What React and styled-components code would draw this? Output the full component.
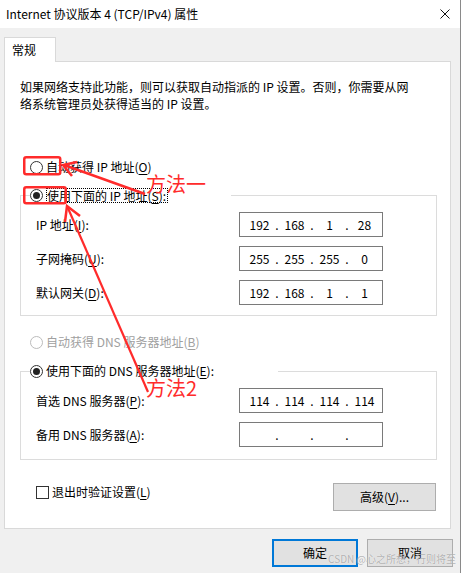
import React from "react";
import styled, { createGlobalStyle } from "styled-components";

const Global = createGlobalStyle`
  html, body { margin: 0; padding: 0; background: #fff; }
  body {
    font-family: "Noto Sans CJK SC", "Noto Sans", sans-serif;
    font-size: 12px;
    color: #000;
  }
  * { box-sizing: border-box; }
`;

const Window = styled.div`
  position: relative;
  width: 461px;
  height: 573px;
  border-right: 1px solid #8a8a8a;
  background: #f0f0f0;
  display: flex;
  flex-direction: column;
  overflow: hidden;
`;

const TitleBar = styled.div`
  height: 28px;
  flex: none;
  background: #fff;
  display: flex;
  align-items: center;
  justify-content: space-between;
  padding: 0 10px 1px 6px;
  line-height: 16px;
`;

const Body = styled.div`
  padding: 9px 0 0 4px;
  display: flex;
  flex-direction: column;
`;

const TabStrip = styled.div`
  display: flex;
`;

const Tab = styled.div`
  position: relative;
  z-index: 1;
  width: 52px;
  height: 25px;
  margin-bottom: -1px;
  background: #fff;
  border: 1px solid #d9d9d9;
  border-bottom: none;
  padding-left: 7px;
  line-height: 23px;
`;

const Pane = styled.div`
  width: 447px;
  height: 468px;
  background: #fff;
  border: 1px solid #d9d9d9;
  padding: 16px 13px 17px 15px;
  display: flex;
  flex-direction: column;
`;

const Desc = styled.p`
  margin: 0;
  line-height: 17px;
  width: 400px;
`;

const RadioRow = styled.div`
  display: flex;
  align-items: center;
  gap: 3px;
  height: 16px;
  line-height: 16px;
  margin: ${p => p.$mt}px 0 0 10px;
  color: ${p => (p.$disabled ? "#a0a0a0" : "#000")};
`;

const RadioCircle = styled.span`
  flex: none;
  width: 13px;
  height: 13px;
  border-radius: 50%;
  border: 1px solid ${p => (p.$disabled ? "#bcbcbc" : "#333")};
  background: #fff;
  display: flex;
  align-items: center;
  justify-content: center;
  &::after {
    content: "";
    display: ${p => (p.$checked ? "block" : "none")};
    width: 7px;
    height: 7px;
    border-radius: 50%;
    background: #222;
  }
`;

const Group = styled.fieldset`
  margin: ${p => p.$mt}px 0 0 0;
  padding: 9px 0 ${p => p.$pb}px 15px;
  border: 1px solid #dcdcdc;
  min-width: 0;
  width: 417px;
`;

const Legend = styled.legend`
  padding: 0;
  margin-left: -6px;
  width: ${p => p.$w}px;
  height: 16px;
  line-height: 16px;
  display: flex;
  align-items: center;
  gap: 3px;
`;

const FocusLabel = styled.span`
  border: 1px dotted #000;
  line-height: 13px;
  padding: 0 1px 0 0;
`;

const Rows = styled.div`
  display: flex;
  flex-direction: column;
  gap: 9px;
`;

const FieldRow = styled.div`
  display: grid;
  grid-template-columns: 203px 144px;
  align-items: center;
  line-height: 16px;
`;

const IpBox = styled.div`
  width: 144px;
  height: 25px;
  border: 1px solid #7a7a7a;
  background: #fff;
  display: flex;
  align-items: center;
  padding-left: 4px;
  line-height: 16px;
`;

const Octet = styled.span`
  width: 31px;
  text-align: center;
`;

const Dot = styled.span`
  width: 4px;
  text-align: center;
`;

const Key = styled.span`
  text-decoration: underline;
  text-underline-offset: 2px;
`;

const Footer = styled.div`
  margin-top: 23px;
  display: flex;
  justify-content: space-between;
  align-items: flex-start;
  padding-right: 1px;
`;

const CheckRow = styled.div`
  margin: 1px 0 0 16px;
  display: flex;
  align-items: center;
  gap: 3px;
  line-height: 16px;
`;

const CheckBox = styled.span`
  width: 13px;
  height: 13px;
  border: 1px solid #333;
  background: #fff;
`;

const Button = styled.div`
  width: ${p => p.$w}px;
  height: 28px;
  background: #e1e1e1;
  border: ${p => (p.$focus ? "2px solid #0078d7" : "1px solid #adadad")};
  display: flex;
  align-items: center;
  justify-content: center;
  line-height: 16px;
`;

const ButtonBar = styled.div`
  margin-top: 10px;
  display: flex;
  justify-content: flex-end;
  gap: 9px;
  padding-right: 7px;
`;

const Overlay = styled.svg`
  position: absolute;
  left: 0;
  top: 0;
  pointer-events: none;
`;

const Note = styled.span`
  position: absolute;
  left: ${p => p.$x}px;
  top: ${p => p.$y}px;
  color: #ff2b2b;
  font-size: 20px;
  line-height: 22px;
  font-family: "Noto Sans CJK SC", sans-serif;
  white-space: nowrap;
`;

const Watermark = styled.span`
  position: absolute;
  right: 4px;
  bottom: 8px;
  font-size: 10px;
  line-height: 12px;
  color: rgba(120, 120, 120, 0.55);
  text-shadow: 0 0 1px rgba(255, 255, 255, 0.9);
  white-space: nowrap;
`;

const Ip = ({ v }) => (
  <IpBox>
    <Octet>{v[0]}</Octet>
    <Dot>.</Dot>
    <Octet>{v[1]}</Octet>
    <Dot>.</Dot>
    <Octet>{v[2]}</Octet>
    <Dot>.</Dot>
    <Octet>{v[3]}</Octet>
  </IpBox>
);

const RED = "#ff2b2b";

export default function App() {
  return (
    <>
      <Global />
      <Window>
        <TitleBar>
          <span>Internet 协议版本 4 (TCP/IPv4) 属性</span>
          <svg width="10" height="10" viewBox="0 0 10 10">
            <path d="M0.5 0.5 L9.5 9.5 M9.5 0.5 L0.5 9.5" stroke="#111" strokeWidth="1" />
          </svg>
        </TitleBar>
        <Body>
          <TabStrip>
            <Tab>常规</Tab>
          </TabStrip>
          <Pane>
            <Desc>
              如果网络支持此功能，则可以获取自动指派的 IP 设置。否则，你需要从网络系统管理员处获得适当的 IP 设置。
            </Desc>
            <RadioRow $mt={47}>
              <RadioCircle />
              <span>
                自动获得 IP 地址(<Key>O</Key>)
              </span>
            </RadioRow>
            <Group $mt={12} $pb={10}>
              <Legend $w={201}>
                <RadioCircle $checked />
                <FocusLabel>
                  使用下面的 IP 地址(<Key>S</Key>):
                </FocusLabel>
              </Legend>
              <Rows>
                <FieldRow>
                  <span>
                    IP 地址(<Key>I</Key>):
                  </span>
                  <Ip v={["192", "168", "1", "28"]} />
                </FieldRow>
                <FieldRow>
                  <span>
                    子网掩码(<Key>U</Key>):
                  </span>
                  <Ip v={["255", "255", "255", "0"]} />
                </FieldRow>
                <FieldRow>
                  <span>
                    默认网关(<Key>D</Key>):
                  </span>
                  <Ip v={["192", "168", "1", "1"]} />
                </FieldRow>
              </Rows>
            </Group>
            <RadioRow $mt={18} $disabled>
              <RadioCircle $disabled />
              <span>
                自动获得 DNS 服务器地址(<Key>B</Key>)
              </span>
            </RadioRow>
            <Group $mt={13} $pb={12}>
              <Legend $w={248}>
                <RadioCircle $checked />
                <span>
                  使用下面的 DNS 服务器地址(<Key>E</Key>):
                </span>
              </Legend>
              <Rows>
                <FieldRow>
                  <span>
                    首选 DNS 服务器(<Key>P</Key>):
                  </span>
                  <Ip v={["114", "114", "114", "114"]} />
                </FieldRow>
                <FieldRow>
                  <span>
                    备用 DNS 服务器(<Key>A</Key>):
                  </span>
                  <Ip v={["", "", "", ""]} />
                </FieldRow>
              </Rows>
            </Group>
            <Footer>
              <CheckRow>
                <CheckBox />
                <span>
                  退出时验证设置(<Key>L</Key>)
                </span>
              </CheckRow>
              <Button $w={103}>
                高级(<Key>V</Key>)...
              </Button>
            </Footer>
          </Pane>
          <ButtonBar>
            <Button $w={86} $focus>
              确定
            </Button>
            <Button $w={86}>取消</Button>
          </ButtonBar>
        </Body>

        <Overlay width="461" height="573" viewBox="0 0 461 573">
          <rect x="24.25" y="157.25" width="36" height="17" rx="2" fill="none" stroke={RED} strokeWidth="2.5" />
          <rect x="24.25" y="187.25" width="41.5" height="16" rx="2" fill="none" stroke={RED} strokeWidth="2.5" />
          <path d="M64 165 L145 194" stroke={RED} strokeWidth="2.5" fill="none" />
          <path d="M77 162 L63 165 L72 176" stroke={RED} strokeWidth="2.5" fill="none" strokeLinejoin="miter" />
          <path d="M67.5 207 L148 392" stroke={RED} strokeWidth="2.2" fill="none" />
          <path d="M80 216 L67 206 L65 222" stroke={RED} strokeWidth="2.5" fill="none" strokeLinejoin="miter" />
        </Overlay>
        <Note $x={146} $y={173}>方法一</Note>
        <Note $x={146} $y={377}>方法2</Note>
        <Watermark>CSDN @心之所想，行则将至</Watermark>
      </Window>
    </>
  );
}
